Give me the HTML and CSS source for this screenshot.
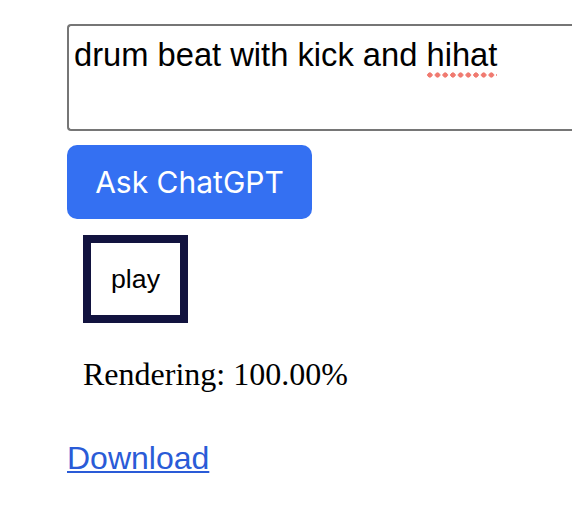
FILE: index.html
```html
<!DOCTYPE html>
<html>
<head>
<meta charset="utf-8">
<link rel="stylesheet" href="styles.css">
</head>
<body>
<div class="page">
  <div class="prompt-box"><span class="txt">drum beat with kick and <span class="misspelled">hihat</span></span></div>
  <button class="ask">Ask ChatGPT</button>
  <div class="player">
    <button class="play">play</button>
    <p class="status">Rendering: 100.00%</p>
  </div>
  <a class="download" href="#">Download</a>
</div>
</body>
</html>
```

FILE: styles.css
```css
html, body {
  margin: 0;
  padding: 0;
  background: #ffffff;
  overflow: hidden;
}
.page {
  padding: 24px 0 0 67px;
  display: flex;
  flex-direction: column;
  align-items: flex-start;
}
.prompt-box {
  box-sizing: border-box;
  width: 505px;
  height: 107px;
  border: 2px solid #767676;
  border-right: none;
  border-radius: 4px 0 0 4px;
  padding: 10px 0 0 5px;
  font-family: "Liberation Sans", Arial, sans-serif;
  font-size: 32.7px;
  line-height: 38px;
  color: #000;
  white-space: nowrap;
}
.misspelled {
  display: inline-block;
  line-height: 38px;
  padding-bottom: 4px;
  margin-bottom: -4px;
  background-image: radial-gradient(circle, #f07a70 2.4px, transparent 2.8px);
  background-size: 7.7px 6px;
  background-repeat: repeat-x;
  background-position: 0 100%;
}
.ask {
  margin-top: 14px;
  width: 245px;
  height: 74px;
  border: none;
  border-radius: 10px;
  background: #3470f2;
  color: #ffffff;
  font-family: Inter, "Liberation Sans", sans-serif;
  font-size: 30px;
  padding: 0;
}
.player {
  padding-left: 16px;
  margin-top: 16px;
}
.play {
  box-sizing: border-box;
  width: 105px;
  height: 88px;
  border: 8px solid #12133f;
  background: #fff;
  font-family: "Liberation Sans", Arial, sans-serif;
  font-size: 26.7px;
  color: #000;
  padding: 0;
}
.status {
  margin: 33px 0 0 0;
  font-family: "Liberation Serif", "Times New Roman", serif;
  font-size: 32px;
  line-height: 37px;
}
.download {
  margin-top: 47px;
  font-family: "Liberation Sans", Arial, sans-serif;
  font-size: 32px;
  line-height: 37px;
  color: #2a5bd7;
  text-decoration: underline;
  text-decoration-thickness: 2px;
  text-underline-offset: 2px;
}
```
